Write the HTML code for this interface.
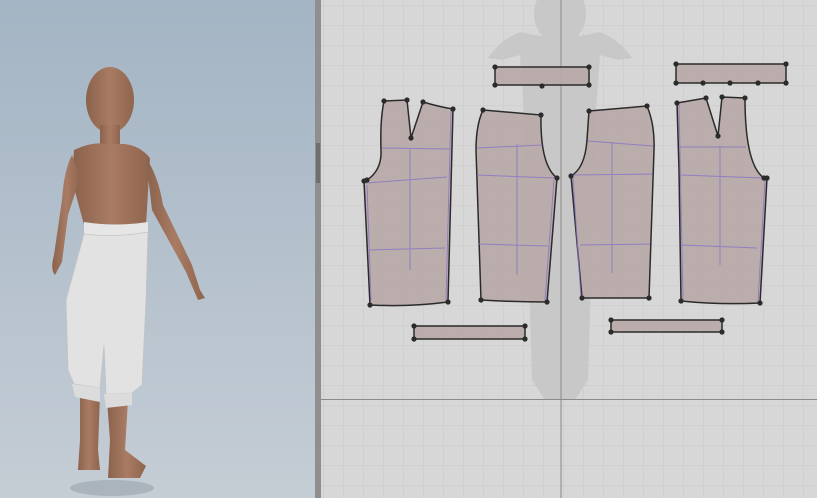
<!DOCTYPE html>
<html><head><style>
html,body{margin:0;padding:0;width:817px;height:498px;overflow:hidden;font-family:"Liberation Sans",sans-serif}
</style></head><body>
<svg width="817" height="498" viewBox="0 0 817 498" xmlns="http://www.w3.org/2000/svg" style="display:block">
<defs>
<linearGradient id="bg" x1="0" y1="0" x2="0" y2="1">
<stop offset="0" stop-color="#a3b4c4"/><stop offset="1" stop-color="#c5cdd5"/></linearGradient>
<linearGradient id="skin" x1="0" y1="0" x2="1" y2="0">
<stop offset="0" stop-color="#8a624c"/><stop offset="0.5" stop-color="#a97b64"/><stop offset="1" stop-color="#8f654d"/></linearGradient>
<pattern id="grid" x="3" y="5" width="20" height="20" patternUnits="userSpaceOnUse">
<path d="M0 0H20M0 0V20" stroke="#c9c9c9" stroke-width="1" fill="none"/></pattern>
</defs>
<rect x="0" y="0" width="315" height="498" fill="url(#bg)"/>
<ellipse cx="112" cy="488" rx="42" ry="8" fill="#9aa3ad" opacity="0.6"/>
<g fill="url(#skin)">
<ellipse cx="110" cy="100" rx="24" ry="33"/>
<rect x="100" y="125" width="20" height="25"/>
<path d="M74 150 Q95 140 110 145 Q135 140 150 158 L146 225 L84 225 L72 180 Z"/>
<path d="M72 155 Q64 170 62 200 L54 255 Q50 270 55 275 L62 262 L68 215 L80 178 Z"/>
<path d="M146 158 Q158 175 163 205 L192 265 L200 290 L205 298 L198 300 L186 272 L152 210 Z"/>
<path d="M80 395 L100 395 L98 450 L100 470 L78 470 L80 440 Z"/>
<path d="M107 400 L128 400 L125 450 L146 466 L140 478 L108 478 L110 440 Z"/>
</g>
<path d="M84 222 Q115 227 148 222 L148 236 Q115 240 84 236 Z" fill="#e6e6e6"/>
<path d="M84 234 Q115 238 148 232 L146 300 L142 385 L132 393 L106 394 L104 345 L100 388 L74 384 L68 370 L66 300 Z" fill="#e2e2e2" stroke="#c4c4c4" stroke-width="0.8"/>
<path d="M72 384 L100 388 L100 402 L75 397 Z M104 394 L132 393 L132 405 L106 408 Z" fill="#dcdcdc"/>
<rect x="315" y="0" width="6" height="498" fill="#8f8f8f"/>
<rect x="316" y="143" width="4" height="40" fill="#5a5a5a" opacity="0.6"/>
<rect x="321" y="0" width="496" height="498" fill="#d7d7d7"/>
<rect x="321" y="0" width="496" height="498" fill="url(#grid)"/>
<g fill="#c8c8c8">
<ellipse cx="560" cy="14" rx="26" ry="30"/>
<path d="M520 32 Q560 42 600 32 Q620 40 632 58 L618 60 L600 55 L596 110 L588 380 L575 400 L545 400 L532 380 L524 110 L520 55 L502 60 L488 58 Q500 40 520 32 Z"/>
</g>
<line x1="561" y1="0" x2="561" y2="498" stroke="#8a8a8a" stroke-width="1"/>
<line x1="321" y1="399.5" x2="817" y2="399.5" stroke="#8a8a8a" stroke-width="1"/>
<g fill="#b7a8a6" fill-opacity="0.9" stroke="#2b2b2b" stroke-width="1.5">
<rect x="495" y="67" width="94" height="18"/>
<rect x="676" y="64" width="110" height="19"/>
<rect x="414" y="326" width="111" height="13"/>
<rect x="611" y="320" width="111" height="12"/>
<path d="M384 101 L407 100 L411 138 L423 102 Q440 107 453 109 L448 302 Q410 307 370 305 L364 181 L367 180 Q382 170 381 150 Q380 120 384 101 Z"/>
<path d="M483 110 L541 115 Q540 165 557 178 L547 302 Q515 302 481 300 L476 150 Q476 125 483 110 Z"/>
<path d="M589 111 L647 106 Q655 125 654 150 L649 298 L582 298 L571 176 Q585 168 587 140 Z"/>
<path d="M677 103 L706 98 L718 136 L722 97 L745 98 Q745 165 764 178 L767 178 L760 303 Q720 305 681 301 L679 170 Z"/>
</g>
<g stroke="#8c76c6" stroke-width="1" fill="none" opacity="0.85">
<path d="M382 148 L450 149 M366 183 L447 177 M369 250 L445 248 M410 148 V270 M367 185 L371 300 M451 110 L446 300"/>
<path d="M477 148 L542 145 M477 175 L555 178 M478 244 L548 246 M517 144 V275 M554 180 L545 300"/>
<path d="M588 141 L653 146 M572 175 L652 174 M580 245 L650 244 M612 142 V273 M573 178 L581 298"/>
<path d="M680 147 L746 147 M681 175 L763 178 M682 245 L757 248 M720 146 V265 M765 180 L758 302 M679 105 L683 300"/>
</g>
<g fill="#2b2b2b">
<circle cx="495" cy="67" r="2.6"/><circle cx="589" cy="67" r="2.6"/><circle cx="495" cy="85" r="2.6"/><circle cx="589" cy="85" r="2.6"/><circle cx="542" cy="86" r="2.6"/>
<circle cx="676" cy="64" r="2.6"/><circle cx="786" cy="64" r="2.6"/><circle cx="676" cy="83" r="2.6"/><circle cx="703" cy="83" r="2.6"/><circle cx="730" cy="83" r="2.6"/><circle cx="758" cy="83" r="2.6"/><circle cx="786" cy="83" r="2.6"/>
<circle cx="414" cy="326" r="2.6"/><circle cx="525" cy="326" r="2.6"/><circle cx="414" cy="339" r="2.6"/><circle cx="525" cy="339" r="2.6"/>
<circle cx="611" cy="320" r="2.6"/><circle cx="722" cy="320" r="2.6"/><circle cx="611" cy="332" r="2.6"/><circle cx="722" cy="332" r="2.6"/>
<circle cx="384" cy="101" r="2.6"/><circle cx="407" cy="100" r="2.6"/><circle cx="411" cy="138" r="2.6"/><circle cx="423" cy="102" r="2.6"/><circle cx="453" cy="109" r="2.6"/><circle cx="448" cy="302" r="2.6"/><circle cx="370" cy="305" r="2.6"/><circle cx="364" cy="181" r="2.6"/><circle cx="367" cy="180" r="2.6"/>
<circle cx="483" cy="110" r="2.6"/><circle cx="541" cy="115" r="2.6"/><circle cx="557" cy="178" r="2.6"/><circle cx="547" cy="302" r="2.6"/><circle cx="481" cy="300" r="2.6"/>
<circle cx="589" cy="111" r="2.6"/><circle cx="647" cy="106" r="2.6"/><circle cx="571" cy="176" r="2.6"/><circle cx="649" cy="298" r="2.6"/><circle cx="582" cy="298" r="2.6"/>
<circle cx="677" cy="103" r="2.6"/><circle cx="706" cy="98" r="2.6"/><circle cx="718" cy="136" r="2.6"/><circle cx="722" cy="97" r="2.6"/><circle cx="745" cy="98" r="2.6"/><circle cx="764" cy="178" r="2.6"/><circle cx="767" cy="178" r="2.6"/><circle cx="760" cy="303" r="2.6"/><circle cx="681" cy="301" r="2.6"/>
</g>
</svg>
</body></html>
